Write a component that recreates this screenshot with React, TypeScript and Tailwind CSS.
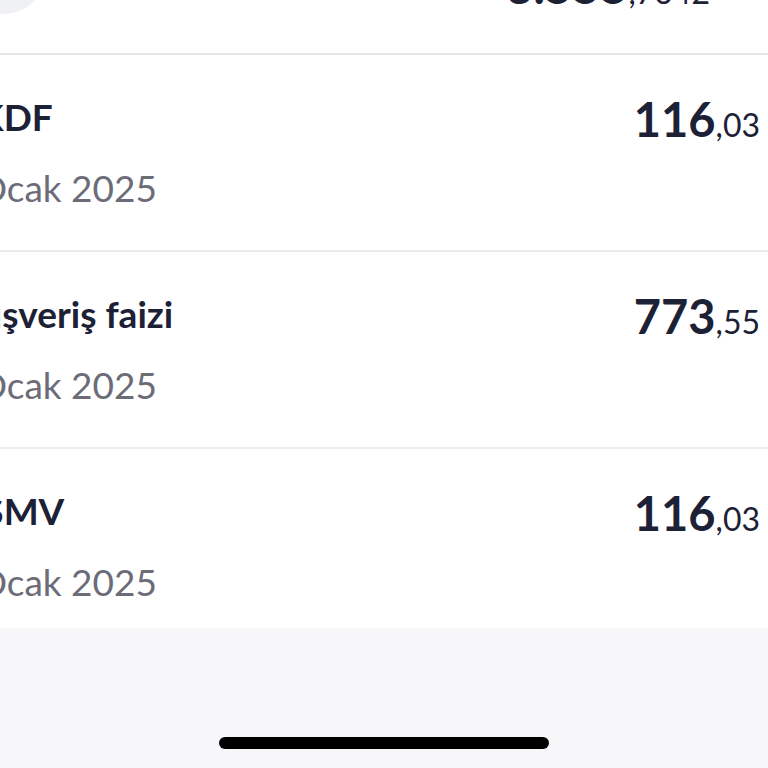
import React from 'react';

const rows = [
    { title: 'KKDF', shift: 'ml-[-47px]', whole: '116', cents: '03' },
    { title: 'Alışveriş faizi', shift: 'ml-[-42px]', whole: '773', cents: '55' },
    { title: 'BSMV', shift: 'ml-[-41px]', whole: '116', cents: '03' },
];

const font = { fontFamily: 'Lato, "Noto Sans", sans-serif' };

export default function App() {
    return (
        <div className="w-full h-[768px] bg-[#f7f7f9] overflow-hidden flex flex-col" style={font}>
            {/* top item, mostly scrolled out of view */}
            <div className="bg-white">
                <div className="flex justify-between items-start mt-[-70px] h-[84px]">
                    <div className="w-[84px] h-[84px] rounded-full bg-[#f0f1f5] ml-[-38px] shrink-0" />
                    <div className="mt-[28px] mr-[58px] text-[#1d2136] leading-[56px] whitespace-nowrap">
                        <span className="text-[48px] font-bold">3.555</span>
                        <span className="text-[32px]">,7642</span>
                    </div>
                </div>
                <div className="h-[39px]" />
                <div className="h-[2px] bg-[#e6e6e9]" />
            </div>

            {rows.map((r, i) => (
                <div
                    key={i}
                    className={`bg-white flex justify-between items-start ${i < rows.length - 1 ? 'h-[197px] border-b-2 border-[#ececef]' : 'h-[179px]'}`}
                >
                    <div className="pt-[38px] whitespace-nowrap">
                        <div className={`text-[37px] leading-[48px] font-bold text-[#1d2136] ${r.shift}`}>{r.title}</div>
                        <div className="mt-[23px] text-[37px] leading-[48px] text-[#6c6c78] ml-[-75px]">15 Ocak 2025</div>
                    </div>
                    <div className="pt-[36px] pr-[8px] text-[#1d2136] leading-[56px] whitespace-nowrap">
                        <span className="text-[47px] font-bold">{r.whole}</span>
                        <span className="text-[32px]">,{r.cents}</span>
                    </div>
                </div>
            ))}

            <div className="flex-1 flex flex-col justify-end items-center pb-[19px]">
                <div className="w-[330px] h-[12px] rounded-full bg-black" />
            </div>
        </div>
    );
}
